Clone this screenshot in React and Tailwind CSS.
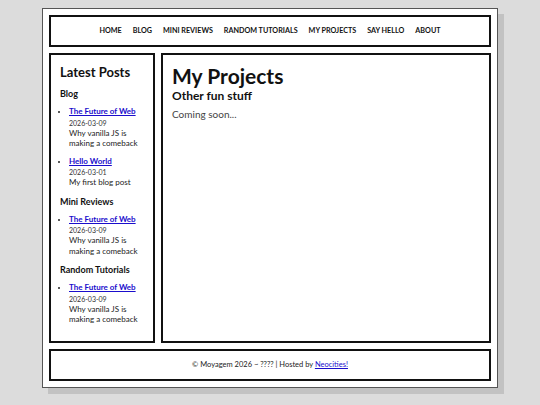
import React from 'react';

const navItems = ['Home', 'Blog', 'Mini Reviews', 'Random Tutorials', 'My Projects', 'Say Hello', 'About'];

const sections = [
  {
    title: 'Blog',
    posts: [
      { title: 'The Future of Web', date: '2026-03-09', desc: 'Why vanilla JS is making a comeback' },
      { title: 'Hello World', date: '2026-03-01', desc: 'My first blog post' },
    ],
  },
  {
    title: 'Mini Reviews',
    posts: [{ title: 'The Future of Web', date: '2026-03-09', desc: 'Why vanilla JS is making a comeback' }],
  },
  {
    title: 'Random Tutorials',
    posts: [{ title: 'The Future of Web', date: '2026-03-09', desc: 'Why vanilla JS is making a comeback' }],
  },
];

const font = { fontFamily: "Lato, 'Open Sans', sans-serif" };

const App = () => {
  return (
    <div className="min-h-[405px] bg-[#dcdcdc] pt-2" style={font}>
      <div className="mx-auto w-[456px] border border-[#555] bg-white p-[6px] shadow-[6px_6px_0_#c2c2c2]">
        <nav className="flex h-[32px] items-center justify-center gap-[11px] border-2 border-[#111]">
          {navItems.map((item) => (
            <a key={item} className="text-[7.2px] font-bold uppercase text-[#111]">
              {item}
            </a>
          ))}
        </nav>

        <div className="mt-[6px] flex h-[290px] gap-[6px]">
          <aside className="w-[106px] shrink-0 border-2 border-[#111] px-[9px] pt-[9px]">
            <h2 className="text-[13px] font-bold leading-[16px] text-[#111]">Latest Posts</h2>
            {sections.map((section) => (
              <div key={section.title} className="mt-[8px]">
                <h3 className="text-[9px] font-bold leading-[12px] text-[#111]">{section.title}</h3>
                <ul className="mt-[6px] list-disc pl-[9px] marker:text-[7px]">
                  {section.posts.map((post, idx) => (
                    <li key={idx} className="mb-[7px] text-[8px] leading-[10.5px] text-[#222]">
                      <a className="font-bold text-[#1a0dcc] underline">{post.title}</a>
                      <div className="mt-[1px] text-[7px] leading-[10px] text-[#333]">{post.date}</div>
                      <div>{post.desc}</div>
                    </li>
                  ))}
                </ul>
              </div>
            ))}
          </aside>

          <main className="flex-1 border-2 border-[#111] px-[9px] pt-[9px]">
            <h1 className="text-[21px] font-bold leading-[24px] text-[#111]">My Projects</h1>
            <h2 className="text-[12px] font-bold leading-[16px] text-[#111]">Other fun stuff</h2>
            <p className="mt-[3px] text-[10px] leading-[14px] text-[#444]">Coming soon...</p>
          </main>
        </div>

        <footer className="mt-[6px] flex h-[32px] items-center justify-center border-2 border-[#111] text-[7.5px] text-[#222]">
          <span>
            © Moyagem 2026 ~ ???? | Hosted by{' '}
            <a className="text-[#1a0dcc] underline">Neocities!</a>
          </span>
        </footer>
      </div>
    </div>
  );
};

export default App;
